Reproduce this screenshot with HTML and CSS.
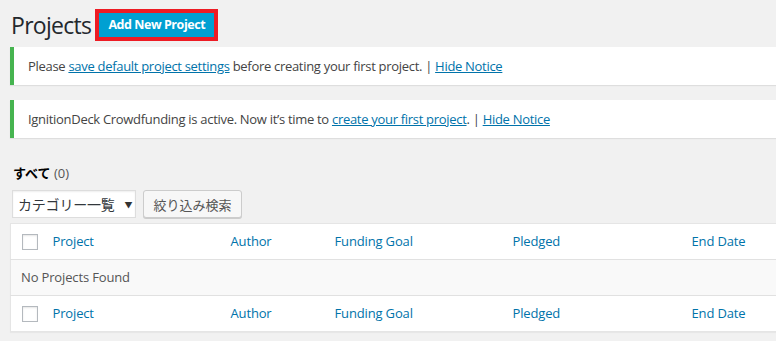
FILE: index.html
```html
<!DOCTYPE html>
<html lang="ja">
<head>
<meta charset="utf-8">
<title>Projects</title>
<link rel="stylesheet" href="styles.css">
</head>
<body>
<div class="wrap">
  <div class="title-row">
    <h1 class="page-title">Projects</h1>
    <span class="highlight"><a class="add-new" href="#">Add New Project</a></span>
  </div>

  <div class="notice">
    <p>Please <a href="#">save default project settings</a> before creating your first project. | <a href="#">Hide Notice</a></p>
  </div>
  <div class="notice notice-second">
    <p>IgnitionDeck Crowdfunding is active. Now it’s time to <a href="#">create your first project</a>. | <a href="#">Hide Notice</a></p>
  </div>

  <ul class="subsubsub">
    <li><span class="current">すべて</span> <span class="count">(0)</span></li>
  </ul>

  <div class="tablenav">
    <div class="select">
      <span class="select-label">カテゴリー一覧</span>
      <span class="arrow">▼</span>
    </div>
    <button class="button" type="button">絞り込み検索</button>
  </div>

  <table class="list-table">
    <colgroup>
      <col class="c-check">
      <col class="c-project">
      <col class="c-author">
      <col class="c-goal">
      <col class="c-pledged">
      <col class="c-end">
    </colgroup>
    <thead>
      <tr>
        <td class="check"><span class="checkbox"></span></td>
        <th><a href="#">Project</a></th>
        <th><a href="#">Author</a></th>
        <th><a href="#">Funding Goal</a></th>
        <th><a href="#">Pledged</a></th>
        <th><a href="#">End Date</a></th>
      </tr>
    </thead>
    <tbody>
      <tr class="no-items">
        <td colspan="6">No Projects Found</td>
      </tr>
    </tbody>
    <tfoot>
      <tr>
        <td class="check"><span class="checkbox"></span></td>
        <th><a href="#">Project</a></th>
        <th><a href="#">Author</a></th>
        <th><a href="#">Funding Goal</a></th>
        <th><a href="#">Pledged</a></th>
        <th><a href="#">End Date</a></th>
      </tr>
    </tfoot>
  </table>
</div>
</body>
</html>
```
FILE: styles.css
```css
html, body {
  margin: 0;
  padding: 0;
  overflow: hidden;
  background: #f1f1f1;
}
body {
  font-family: "Open Sans", "Noto Sans CJK JP", sans-serif;
  font-size: 13px;
  letter-spacing: -0.3px;
  color: #444;
  width: 776px;
  height: 341px;
}
a { color: #0073aa; }
.wrap {
  padding: 9px 0 0 10px;
  width: 800px;
}
.title-row {
  display: flex;
  align-items: center;
  height: 32px;
}
.page-title {
  margin: 0 0 0 1px;
  font-size: 23px;
  font-weight: 400;
  letter-spacing: -0.7px;
  line-height: 29px;
  color: #23282d;
}
.highlight {
  margin-left: 4px;
  border: 4px solid #ed1c24;
  display: flex;
}
.add-new {
  display: block;
  background: #00a0d2;
  color: #fff;
  text-decoration: none;
  font-weight: 700;
  font-size: 12.5px;
  letter-spacing: -0.45px;
  line-height: 24px;
  height: 24px;
  padding: 0 9px;
}
.notice {
  margin-top: 6px;
  background: #fff;
  border-left: 4px solid #46b450;
  box-shadow: 0 1px 1px rgba(0,0,0,0.08);
  padding: 0 14px;
  height: 38px;
  display: flex;
  align-items: center;
}
.notice-second { margin-top: 15px; }
.notice p { margin: 0; line-height: 19px; color: #444; }
.subsubsub {
  list-style: none;
  margin: 25px 0 0 3px;
  padding: 0;
  line-height: 20px;
  color: #666;
  letter-spacing: 0;
}
.subsubsub .current {
  font-weight: 700;
  color: #000;
}
.subsubsub .count { color: #555; }
.tablenav {
  display: flex;
  gap: 7px;
  margin-top: 7px;
  margin-left: 2px;
  height: 28px;
  letter-spacing: 0;
}
.select {
  box-sizing: border-box;
  width: 124px;
  height: 28px;
  background: #fff;
  border: 1px solid #ddd;
  box-shadow: inset 0 1px 2px rgba(0,0,0,0.07);
  display: flex;
  align-items: center;
  padding: 0 0 0 5px;
  font-size: 14px;
  color: #32373c;
  white-space: nowrap;
}
.select-label { letter-spacing: -0.2px; }
.select .arrow { font-size: 8px; color: #333; margin-left: 10px; }
.button {
  box-sizing: border-box;
  height: 28px;
  width: 99px;
  padding: 0;
  white-space: nowrap;
  font-family: "Open Sans", "Noto Sans CJK JP", sans-serif;
  font-size: 13px;
  letter-spacing: 0;
  color: #555;
  background: #f7f7f7;
  border: 1px solid #ccc;
  border-radius: 3px;
  box-shadow: 0 1px 0 #ccc;
}
.list-table {
  margin-top: 5px;
  border-collapse: collapse;
  table-layout: fixed;
  width: 790px;
  background: #fff;
  border: 1px solid #e5e5e5;
  box-shadow: 0 1px 1px rgba(0,0,0,0.04);
  letter-spacing: -0.15px;
}
.c-check { width: 32px; }
.c-project { width: 178px; }
.c-author { width: 104px; }
.c-goal { width: 178px; }
.c-pledged { width: 179px; }
.c-end { width: 119px; }
.list-table th, .list-table td {
  text-align: left;
  font-weight: 400;
  padding: 8px 10px;
  line-height: 19px;
  height: 19px;
}
.list-table th a { text-decoration: none; }
.list-table thead tr { border-bottom: 1px solid #e1e1e1; }
.list-table tfoot tr { border-top: 1px solid #e1e1e1; }
.list-table td.check { padding: 0 0 0 11px; vertical-align: middle; }
.checkbox {
  display: block;
  box-sizing: border-box;
  width: 16px;
  height: 16px;
  border: 1px solid #b4b9be;
  background: #fff;
  box-shadow: inset 0 1px 2px rgba(0,0,0,0.1);
}
.no-items td {
  background: #f9f9f9;
  color: #555;
}
```
